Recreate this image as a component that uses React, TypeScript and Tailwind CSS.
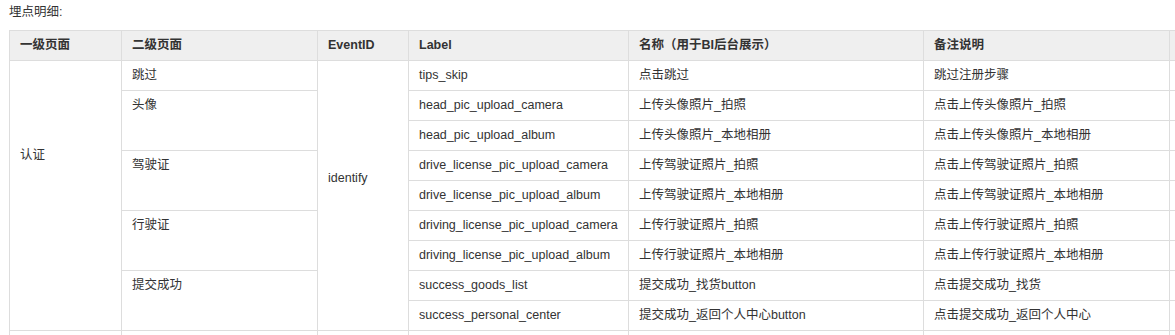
import React from 'react';

const rows = [
    { label: 'tips_skip', name: '点击跳过', note: '跳过注册步骤' },
    { label: 'head_pic_upload_camera', name: '上传头像照片_拍照', note: '点击上传头像照片_拍照' },
    { label: 'head_pic_upload_album', name: '上传头像照片_本地相册', note: '点击上传头像照片_本地相册' },
    { label: 'drive_license_pic_upload_camera', name: '上传驾驶证照片_拍照', note: '点击上传驾驶证照片_拍照' },
    { label: 'drive_license_pic_upload_album', name: '上传驾驶证照片_本地相册', note: '点击上传驾驶证照片_本地相册' },
    { label: 'driving_license_pic_upload_camera', name: '上传行驶证照片_拍照', note: '点击上传行驶证照片_拍照' },
    { label: 'driving_license_pic_upload_album', name: '上传行驶证照片_本地相册', note: '点击上传行驶证照片_本地相册' },
    { label: 'success_goods_list', name: '提交成功_找货button', note: '点击提交成功_找货' },
    { label: 'success_personal_center', name: '提交成功_返回个人中心button', note: '点击提交成功_返回个人中心' },
];

// each cell draws its own right + bottom line, the grid draws left + top
const cell = 'border-r border-b border-[#dddddd] px-[10px] leading-[29px] whitespace-nowrap overflow-hidden';
const head = `${cell} bg-[#efefef] font-bold`;

export default function App() {
    return (
        <div
            className="w-[1175px] h-[335px] overflow-hidden bg-white text-[#333333] text-[12.5px]"
            style={{ fontFamily: '"Liberation Sans", Arial, "Noto Sans CJK SC", sans-serif' }}
        >
            <div className="pl-[9px] pt-[3px] h-[30px] leading-[18px]">埋点明细:</div>

            <div className="ml-[9px] grid grid-cols-[112px_196px_91px_220px_295px_246px_200px] auto-rows-[30px] border-l border-t border-[#dddddd] w-max">
                {/* header */}
                <div className={head}>一级页面</div>
                <div className={head}>二级页面</div>
                <div className={head}>EventID</div>
                <div className={head}>Label</div>
                <div className={head}>名称（用于BI后台展示）</div>
                <div className={head}>备注说明</div>
                <div className={head}></div>

                {/* merged cells */}
                <div className={`${cell} col-start-1 row-start-2 row-span-9 pt-[80px] leading-[18px]`}>认证</div>
                <div className={`${cell} col-start-2 row-start-2`}>跳过</div>
                <div className={`${cell} col-start-2 row-start-3 row-span-2`}>头像</div>
                <div className={`${cell} col-start-2 row-start-5 row-span-2`}>驾驶证</div>
                <div className={`${cell} col-start-2 row-start-7 row-span-2`}>行驶证</div>
                <div className={`${cell} col-start-2 row-start-9 row-span-2`}>提交成功</div>
                <div className={`${cell} col-start-3 row-start-2 row-span-9 pt-[103px] leading-[18px]`}>identify</div>

                {rows.map((r) => (
                    <React.Fragment key={r.label}>
                        <div className={`${cell} col-start-4`}>{r.label}</div>
                        <div className={`${cell} col-start-5`}>{r.name}</div>
                        <div className={`${cell} col-start-6`}>{r.note}</div>
                        <div className={`${cell} col-start-7`}></div>
                    </React.Fragment>
                ))}

                {/* next row, cut off by the window */}
                <div className={`${cell} col-start-1`}></div>
                <div className={cell}></div>
                <div className={cell}></div>
                <div className={cell}></div>
                <div className={cell}></div>
                <div className={cell}></div>
                <div className={cell}></div>
            </div>
        </div>
    );
}
